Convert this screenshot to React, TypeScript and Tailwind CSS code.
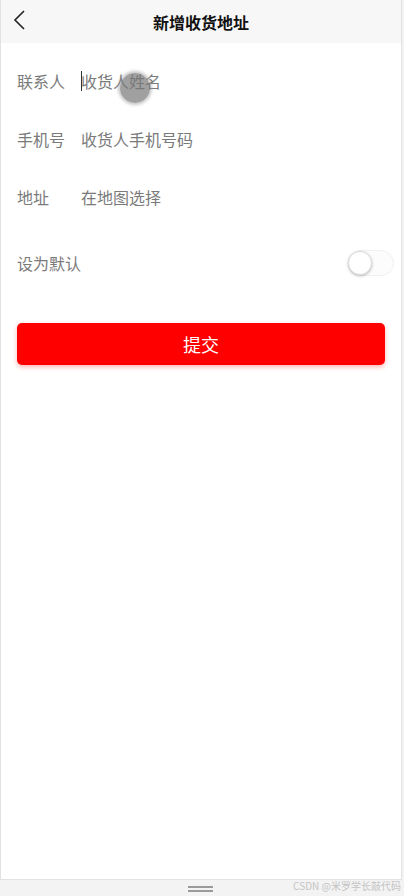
import React from "react";

const font = { fontFamily: '"Noto Sans CJK SC", "Noto Sans", sans-serif' };

function Row({ label, placeholder, caret }: { label: string; placeholder: string; caret?: boolean }) {
  return (
    <div className="flex h-[58px] items-center px-[16px]">
      <span className="w-[64px] text-[16px] leading-none text-[#7a7a7a]">{label}</span>
      <span className="relative text-[16px] leading-none text-[#7a7a7a]">
        {caret && <span className="absolute left-0 top-[-2px] h-[20px] w-[1px] bg-[#333]" />}
        {placeholder}
      </span>
    </div>
  );
}

export default function App() {
  return (
    <div className="relative flex h-[896px] w-[404px] flex-col bg-[#f3f3f3]" style={font}>
      <div className="flex h-[880px] w-[402px] flex-col border-x border-b border-[#e2e2e2] bg-white">
        <div className="relative flex h-[43px] items-center justify-center bg-[#f7f7f7]">
          <svg className="absolute left-[11px] top-[8px]" width="16" height="24" viewBox="0 0 16 24">
            <path d="M12 3 L3 12 L12 21" fill="none" stroke="#222" strokeWidth="1.6" />
          </svg>
          <span className="text-[16px] font-bold text-[#111]">新增收货地址</span>
        </div>
        <div className="pt-[9px]">
          <Row label="联系人" placeholder="收货人姓名" caret />
          <Row label="手机号" placeholder="收货人手机号码" />
          <Row label="地址" placeholder="在地图选择" />
          <div className="mt-[8px] flex h-[58px] items-center justify-between px-[16px]">
            <span className="text-[16px] leading-none text-[#7a7a7a]">设为默认</span>
            <div className="relative mr-[-9px] h-[26px] w-[46px] rounded-full border border-[#f0f0f0] bg-[#fcfcfc]">
              <div className="absolute left-[-1px] top-[0px] h-[24px] w-[24px] rounded-full border border-[#dcdcdc] bg-white shadow-[0_1px_3px_rgba(0,0,0,0.25)]" />
            </div>
          </div>
          <div className="mt-[31px] px-[16px]">
            <button className="flex h-[42px] w-full items-center justify-center rounded-[5px] bg-[#ff0000] text-[18px] text-white shadow-[0_2px_5px_rgba(255,0,0,0.3)]">
              提交
            </button>
          </div>
        </div>
      </div>
      <div className="relative h-[16px]">
        <div className="absolute left-[188px] top-[6px] h-[2px] w-[25px] bg-[#9a9a9a]" />
        <div className="absolute left-[188px] top-[10px] h-[2px] w-[25px] bg-[#9a9a9a]" />
        <span className="absolute right-[3px] top-[-2px] text-[10px] text-[#c4c4c4]">CSDN @米罗学长敲代码</span>
      </div>
      <div className="absolute left-[120px] top-[73px] h-[30px] w-[30px] rounded-full bg-[rgba(120,120,120,0.7)] shadow-[0_0_3px_2px_rgba(150,150,150,0.5)]" />
    </div>
  );
}
